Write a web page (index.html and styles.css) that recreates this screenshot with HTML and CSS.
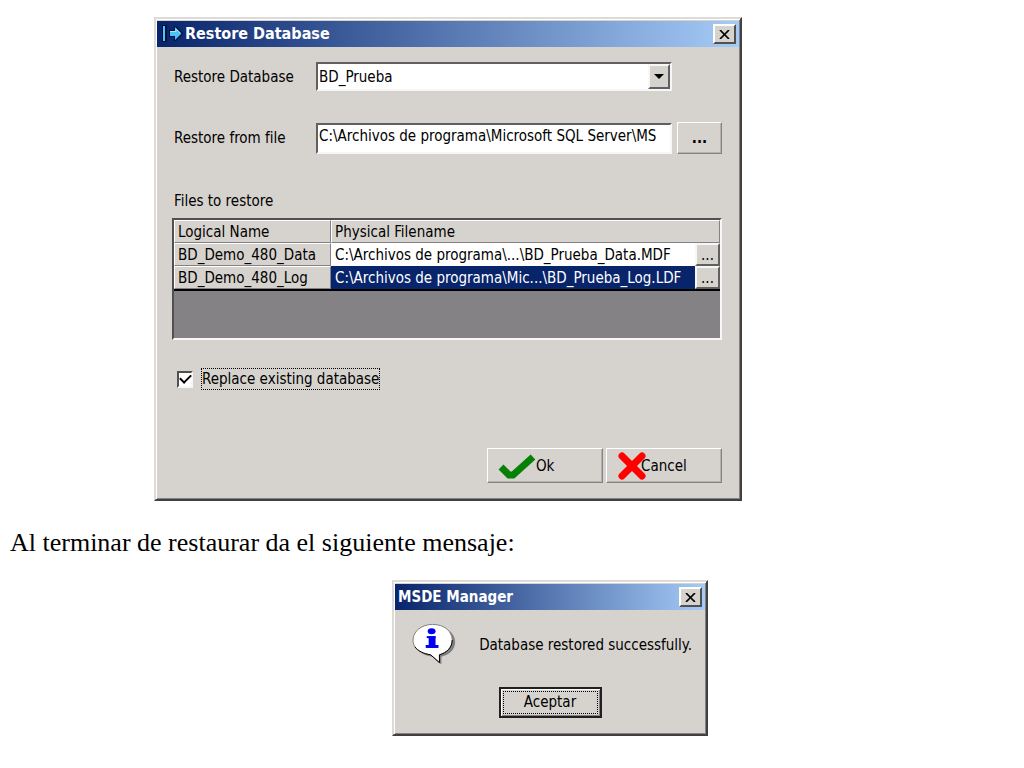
FILE: index.html
```html
<!DOCTYPE html>
<html lang="es">
<head>
  <meta charset="UTF-8">
  <meta name="viewport" content="width=device-width, initial-scale=1.0">
  <title>Restore Database</title>
  <link rel="stylesheet" href="styles.css">
</head>
<body>
  <section class="window restore">
    <header class="titlebar">
      <svg class="app-icon" width="22" height="18" viewBox="0 0 22 18">
        <rect x="0" y="0" width="5" height="17" fill="#02103c"/>
        <rect x="1" y="1" width="2" height="15" fill="#4fc8f0"/>
        <path d="M7 5h5V1h2l7 7v1l-7 7h-2v-4H7z" fill="#041040"/>
        <path d="M8 6h5V2l6.500 6.500L13 15v-4H8z" fill="#4cc4f6"/>
        <path d="M8 6.500h6V4l4 4" fill="none" stroke="#a4e8fc"/>
      </svg>
      <h1>Restore Database</h1>
      <button class="close" type="button" aria-label="Close">
        <svg width="11" height="9" viewBox="0 0 11 9"><path d="M1 0l9 9M10 0L1 9" stroke="#000" stroke-width="1.700"/></svg>
      </button>
    </header>
    <form class="restore-form">
      <div class="row row-database">
        <label for="database">Restore Database</label>
        <div class="combo">
          <select id="database">
            <option>BD_Prueba</option>
          </select>
          <span class="combo-arrow"></span>
        </div>
      </div>
      <div class="row row-file">
        <label for="file">Restore from file</label>
        <input id="file" class="field" type="text" value="C:\Archivos de programa\Microsoft SQL Server\MS">
        <button class="button browse" type="button">...</button>
      </div>
      <h2>Files to restore</h2>
      <div class="grid">
        <table>
          <colgroup>
            <col class="col-name">
            <col>
            <col class="col-pick">
          </colgroup>
          <thead>
            <tr>
              <th>Logical Name</th>
              <th colspan="2">Physical Filename</th>
            </tr>
          </thead>
          <tbody>
            <tr>
              <th>BD_Demo_480_Data</th>
              <td>C:\Archivos de programa\...\BD_Prueba_Data.MDF</td>
              <td class="pick"><button type="button">...</button></td>
            </tr>
            <tr class="selected">
              <th>BD_Demo_480_Log</th>
              <td>C:\Archivos de programa\Mic...\BD_Prueba_Log.LDF</td>
              <td class="pick"><button type="button">...</button></td>
            </tr>
          </tbody>
        </table>
      </div>
      <div class="check">
        <input id="replace" type="checkbox" checked>
        <label for="replace">Replace existing database</label>
      </div>
      <div class="actions">
        <button class="button" type="button">
          <svg width="38" height="26" viewBox="0 0 38 26"><path d="M3 14l8 8h4L35 4" fill="none" stroke="#078007" stroke-width="7"/></svg>
          <span>Ok</span>
        </button>
        <button class="button cancel" type="button">
          <svg width="30" height="28" viewBox="0 0 30 28"><path d="M5 4l20 20M25 4L5 24" fill="none" stroke="#fe0000" stroke-width="7" stroke-linecap="round"/></svg>
          <span>Cancel</span>
        </button>
      </div>
    </form>
  </section>

  <p class="caption">Al terminar de restaurar da el siguiente mensaje:</p>

  <section class="window message">
    <header class="titlebar">
      <h1>MSDE Manager</h1>
      <button class="close" type="button" aria-label="Close">
        <svg width="11" height="9" viewBox="0 0 11 9"><path d="M1 0l9 9M10 0L1 9" stroke="#000" stroke-width="1.700"/></svg>
      </button>
    </header>
    <div class="message-body">
      <svg width="46" height="43" viewBox="0 0 46 43">
        <path d="M23 3c12 0 21 7 21 16 0 8-6 13-14 15v8l-9-8C10 33 4 27 4 19 4 10 12 3 23 3z" fill="#808080"/>
        <path d="M21 1c12 0 20 7 20 16 0 8-6 13-13 15v8l-9-8C8 31 1 25 1 17 1 8 10 1 21 1z" fill="#fff" stroke="#808080"/>
        <path d="M41 17c0 8-6 13-13 15v8l-9-8C12 31 6 28 3 24" fill="none" stroke="#000"/>
        <ellipse cx="20" cy="8" rx="4" ry="3" fill="#0000f4"/>
        <rect x="15" y="13" width="9" height="2" fill="#0000f4"/>
        <rect x="17" y="13" width="7" height="12" fill="#0000f4"/>
        <rect x="14" y="22" width="13" height="3" fill="#0000f4"/>
      </svg>
      <p>Database restored successfully.</p>
    </div>
    <button class="accept" type="button"><span>Aceptar</span></button>
  </section>
</body>
</html>
```
FILE: styles.css
```css
* {
  box-sizing: border-box;
}
body {
  margin: 0;
  padding-top: 17px;
  background: #fff;
  color: #000;
  font-family: "DejaVu Sans Condensed", "Noto Sans", sans-serif;
  font-size: 15px;
  line-height: 20px;
}
h1, h2, p {
  margin: 0;
}
button, input, select {
  margin: 0;
  color: #000;
  font: inherit;
}
button {
  padding: 0;
  background: #d6d3ce;
}

/* windows */
.window {
  padding: 2px 1px 1px;
  background: #d6d3ce;
  border: 2px solid;
  border-color: #dedbd6 #404040 #404040 #dedbd6;
  box-shadow: inset 1px 1px #fff, inset -1px -1px #848284;
}
.restore {
  margin: 0 282px 0 154px;
}
.message {
  margin: 0 316px 0 392px;
}
.titlebar {
  display: flex;
  align-items: center;
  height: 26px;
  padding: 0 3px 0 5px;
  background: linear-gradient(to right, #08246b, #a5cbf7);
  color: #fff;
}
.titlebar h1 {
  flex: 1;
  font-size: 16px;
  line-height: 20px;
}
.app-icon {
  margin-right: 1px;
}
.close {
  display: flex;
  align-items: center;
  justify-content: center;
  width: 23px;
  height: 20px;
  border: 2px solid;
  border-color: #fff #505050 #505050 #fff;
}

/* form */
.restore-form {
  padding: 15px 17px 15px 15px;
}
.row {
  display: flex;
  align-items: center;
}
.row label {
  width: 144px;
  padding-left: 2px;
}
.row-database {
  padding-right: 50px;
}
.row-file {
  margin-top: 31px;
}
.field, .combo {
  flex: 1;
  min-width: 0;
  background: #fff;
  border: 2px solid;
  border-color: #606060 #f7f7f7 #f7f7f7 #606060;
}
.field {
  height: 31px;
  padding: 0 1px 4px;
}
.combo {
  position: relative;
  height: 29px;
}
.combo select {
  width: 100%;
  height: 100%;
  padding: 0 24px 0 1px;
  appearance: none;
  background: none;
  border: 0;
}
.combo-arrow {
  position: absolute;
  top: 0;
  right: 0;
  display: flex;
  align-items: center;
  justify-content: center;
  width: 22px;
  height: 25px;
  background: #d6d3ce;
  border: 2px solid;
  border-color: #f7f7f7 #606060 #606060 #f7f7f7;
  pointer-events: none;
}
.combo-arrow::after {
  content: "";
  border: 5px solid transparent;
  border-top-color: #000;
  border-bottom: 0;
}
.button {
  border: 1px solid;
  border-color: #fff #848284 #848284 #fff;
  box-shadow: inset -1px -1px #b5b2ad;
}
.browse {
  width: 45px;
  height: 32px;
  margin-left: 5px;
  font-weight: bold;
}
h2 {
  margin-top: 37px;
  padding-left: 2px;
  font-size: 15px;
  font-weight: normal;
}

/* file list */
.grid {
  height: 122px;
  margin-top: 7px;
  background: #848284;
  border: 2px solid;
  border-color: #505050 #f7f7f7 #f7f7f7 #505050;
}
table {
  width: 100%;
  table-layout: fixed;
  border-collapse: separate;
  border-spacing: 0;
  border-bottom: 2px solid #000;
}
.col-name {
  width: 157px;
}
.col-pick {
  width: 25px;
}
th, td {
  height: 23px;
  padding: 0 3px;
  line-height: 20px;
  text-align: left;
  white-space: nowrap;
}
th {
  background: #d6d3ce;
  border: 1px solid;
  border-color: #fff #848284 #848284 #fff;
  font-weight: normal;
}
td {
  background: #fff;
  padding-left: 4px;
}
.selected td {
  background: #08246b;
  color: #fff;
}
td.pick {
  padding: 0;
}
.pick button {
  display: block;
  width: 100%;
  height: 23px;
  border: 2px solid;
  border-color: #f7f7f7 #606060 #606060 #f7f7f7;
  line-height: 18px;
}

.check {
  display: flex;
  align-items: center;
  gap: 8px;
  margin-top: 28px;
  padding-left: 5px;
}
.check input {
  display: grid;
  place-items: center;
  width: 16px;
  height: 17px;
  appearance: none;
  background: #fff;
  border: 2px solid;
  border-color: #505050 #f7f7f7 #f7f7f7 #505050;
}
.check input:checked::after {
  content: "";
  width: 9px;
  height: 5px;
  margin-bottom: 3px;
  border: solid #000;
  border-width: 0 0 2px 2px;
  transform: rotate(-45deg);
}
.check label {
  border: 1px dotted #000;
}
.actions {
  display: flex;
  justify-content: flex-end;
  gap: 3px;
  margin-top: 58px;
}
.actions .button {
  display: flex;
  align-items: center;
  width: 116px;
  height: 35px;
  padding-left: 10px;
}
.cancel span {
  margin-left: -6px;
}

.caption {
  margin: 27px 10px 22px;
  font-family: "Liberation Serif", serif;
  font-size: 26px;
  line-height: 30px;
}

/* message box */
.message .titlebar {
  padding-left: 3px;
}
.message h1 {
  font-size: 15px;
}
.message-body {
  display: flex;
  align-items: center;
  gap: 22px;
  padding: 13px 13px 0 17px;
}
.message-body p {
  white-space: nowrap;
}
.accept {
  display: block;
  width: 103px;
  height: 31px;
  margin: 21px auto 15px;
  padding: 2px;
  border: 2px solid #202020;
  box-shadow: inset 1px 1px #fff, inset -1px -1px #848284;
}
.accept span {
  display: block;
  height: 100%;
  border: 1px dotted #000;
}
```
